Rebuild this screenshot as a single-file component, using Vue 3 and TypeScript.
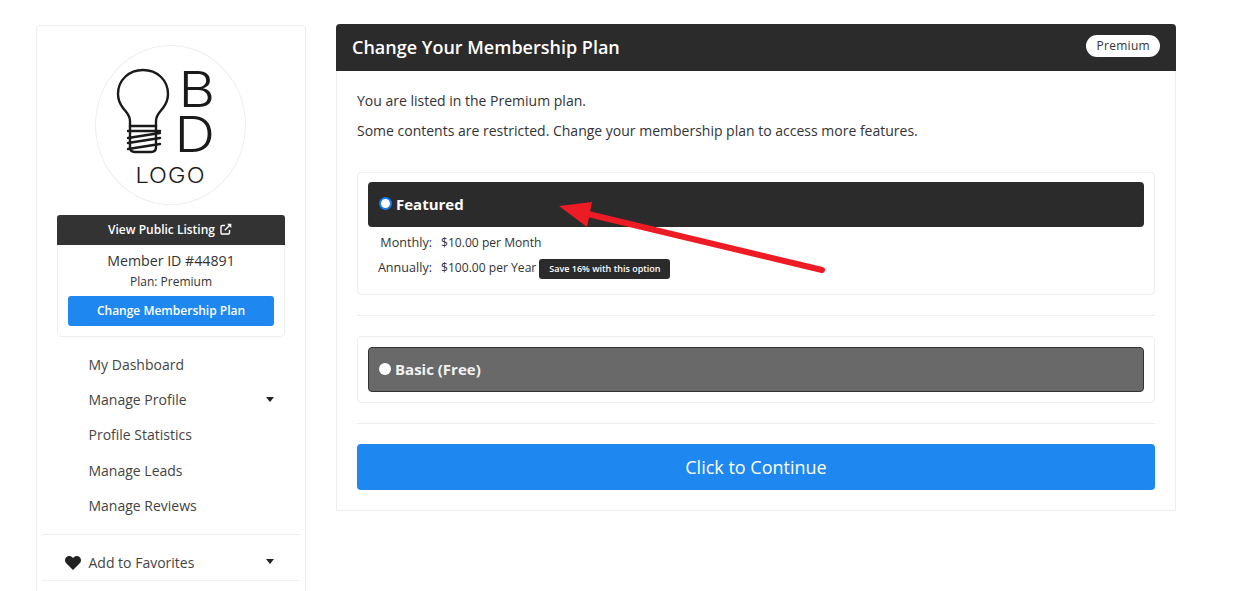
<script setup lang="ts">
const navItems: { label: string; caret?: boolean }[] = [
  { label: 'My Dashboard' },
  { label: 'Manage Profile', caret: true },
  { label: 'Profile Statistics' },
  { label: 'Manage Leads' },
  { label: 'Manage Reviews' },
];
</script>

<template>
  <div class="page">
    <aside class="sidebar">
      <div class="logo">
        <svg width="151" height="160" viewBox="0 0 151 160">
          <g transform="translate(1 0)" fill="none" stroke="#1a1a1a" stroke-width="2.4" stroke-linecap="round" stroke-linejoin="round">
            <path d="M34 81V76C34 70 30 67 27 63 24 59 22 55 22 49 22 35 33 25 47 25 61 25 72 35 72 49 72 55 70 59 67 63 64 67 60 70 60 76V81" />
            <path d="M34 81V102c0 3 2 5 5 5h16c3 0 5-2 5-5V81" />
            <path d="M34 81H60" />
            <path d="M32 86H64M32 93 64 88M32 98 64 93M32 104 64 99" />
          </g>
          <text transform="translate(83.500 62) scale(1.15 1)" class="logo-letter">B</text>
          <text transform="translate(79.400 107) scale(1.15 1)" class="logo-letter">D</text>
          <text transform="translate(75.500 138) scale(1.12 1)" text-anchor="middle" class="logo-word">LOGO</text>
        </svg>
      </div>

      <div class="member">
        <a class="listing">
          View Public Listing
          <svg width="12" height="12" viewBox="0 0 12 12" fill="none" stroke="#fff" stroke-width="1.400">
            <path d="M9.500 7v2.800c0 .7-.5 1.200-1.200 1.200H2.200C1.500 11 1 10.500 1 9.800V3.700c0-.7.500-1.200 1.200-1.200H5" />
            <path d="M4.800 7.200 10.500 1.500" />
            <path d="M7 .7h4.300V5z" fill="#fff" stroke="none" />
          </svg>
        </a>
        <div class="member-body">
          <div class="member-id">Member ID #44891</div>
          <div class="member-plan">Plan: Premium</div>
          <button type="button" class="change-btn">Change Membership Plan</button>
        </div>
      </div>

      <nav class="nav">
        <a v-for="item in navItems" :key="item.label" class="nav-item">
          {{ item.label }}
          <span v-if="item.caret" class="caret"></span>
        </a>
      </nav>

      <div class="favorites">
        <svg class="heart" width="16" height="14" viewBox="0 0 16 14">
          <path d="M8 14 1.500 7.500C-.5 5.500-.4 2.800 1.200 1.200 2.900-.4 5.600-.4 7.200 1.300L8 2.100l.8-.8c1.600-1.700 4.300-1.700 6 -.1 1.600 1.600 1.700 4.300-.3 6.300z" fill="#222" />
        </svg>
        <a class="nav-item">
          Add to Favorites
          <span class="caret"></span>
        </a>
      </div>
    </aside>

    <main class="panel">
      <header class="panel-head">
        <h1>Change Your Membership Plan</h1>
        <span class="badge">Premium</span>
      </header>
      <div class="panel-body">
        <p>You are listed in the Premium plan.</p>
        <p>Some contents are restricted. Change your membership plan to access more features.</p>

        <section class="plan plan-first">
          <label class="plan-head">
            <input type="radio" name="plan" checked />
            Featured
          </label>
          <div class="price-row">
            <span class="price-label">Monthly:</span>
            <span>$10.00 per Month</span>
          </div>
          <div class="price-row">
            <span class="price-label">Annually:</span>
            <span>$100.00 per Year</span>
            <span class="save">Save 16% with this option</span>
          </div>
        </section>

        <hr />

        <section class="plan">
          <label class="plan-head free">
            <input type="radio" name="plan" />
            Basic (Free)
          </label>
        </section>

        <hr />

        <button type="button" class="continue">Click to Continue</button>
      </div>
    </main>

    <!-- annotation drawn on top of the screenshot -->
    <svg class="arrow" width="1243" height="591" viewBox="0 0 1243 591">
      <path d="M822 270 588 214" stroke="#ed1c24" stroke-width="6" stroke-linecap="round" fill="none" />
      <path d="M559 206 592 202 587 227z" fill="#ed1c24" />
    </svg>
  </div>
</template>

<style>
html,
body {
  margin: 0;
  background: #fff;
  overflow: hidden;
}
</style>

<style scoped>
.page {
  position: relative;
  display: flex;
  align-items: flex-start;
  gap: 30px;
  width: 1243px;
  height: 591px;
  box-sizing: border-box;
  padding: 24px 0 0 36px;
  overflow: hidden;
  font-family: "Open Sans", sans-serif;
  color: #333;
}

.sidebar {
  flex: none;
  width: 270px;
  box-sizing: border-box;
  margin-top: 1px;
  padding: 19px 5px 60px;
  border: 1px solid #eee;
  border-radius: 4px;
}

.logo {
  width: 151px;
  height: 160px;
  margin: 0 0 10px 53px;
  border: 1px solid #eee;
  border-radius: 50%;
  box-sizing: border-box;
  overflow: hidden;
}

.logo svg {
  display: block;
  margin: -1px;
}

.logo-letter {
  font-family: Inter, sans-serif;
  font-weight: 300;
  font-size: 49px;
  fill: #1a1a1a;
}

.logo-word {
  font-family: Inter, sans-serif;
  font-weight: 300;
  font-size: 21px;
  letter-spacing: 1px;
  fill: #1a1a1a;
}

.member {
  width: 228px;
  box-sizing: border-box;
  margin-left: 15px;
  border: 1px solid #eee;
  border-radius: 5px;
}

.listing {
  display: flex;
  align-items: center;
  justify-content: center;
  gap: 5px;
  height: 30px;
  padding: 0 2px 2px 0;
  box-sizing: border-box;
  margin: -1px -1px 0;
  border-radius: 3px 3px 0 0;
  background: #333;
  color: #fff;
  font-size: 12px;
  font-weight: 600;
}

.member-body {
  padding: 6px 10px 10px;
  text-align: center;
}

.member-id {
  font-size: 14.200px;
  font-weight: 500;
  line-height: 20px;
  color: #333;
}

.member-plan {
  margin-top: 1px;
  font-size: 12px;
  line-height: 20px;
}

.change-btn {
  display: block;
  width: 100%;
  height: 30px;
  margin-top: 4px;
  padding: 0 0 1px;
  border: 0;
  border-radius: 3px;
  background: #1f87f0;
  color: #fff;
  font-family: inherit;
  font-size: 12px;
  font-weight: 600;
}

.nav {
  margin-top: 9.750px;
  padding-bottom: 11.250px;
  border-bottom: 1px solid #eee;
}

.nav-item {
  display: flex;
  align-items: center;
  justify-content: space-between;
  height: 35.250px;
  padding: 0 26px 0 46.500px;
  font-size: 14px;
  color: #444;
}

.caret {
  width: 0;
  height: 0;
  margin-bottom: 1px;
  border-top: 5px solid #222;
  border-left: 4.500px solid transparent;
  border-right: 4.500px solid transparent;
}

.favorites {
  position: relative;
  margin-top: 9px;
  border-bottom: 1px solid #f3f3f3;
}

.favorites .nav-item {
  height: 36px;
}

.heart {
  position: absolute;
  left: 23px;
  top: 12px;
}

.panel {
  flex: none;
  width: 840px;
}

.panel-head {
  display: flex;
  align-items: center;
  justify-content: space-between;
  height: 47px;
  box-sizing: border-box;
  padding: 0 16px;
  background: #2b2b2b;
  border-radius: 4px 4px 0 0;
}

.panel-head h1 {
  margin: -2px 0 0;
  color: #fff;
  font-size: 18px;
  font-weight: 600;
}

.badge {
  margin-top: -4px;
  padding: 0 10px;
  height: 22px;
  line-height: 22px;
  border-radius: 11px;
  background: #fff;
  color: #333;
  font-size: 12px;
  font-weight: 500;
  letter-spacing: 0.3px;
}

.panel-body {
  height: 440px;
  box-sizing: border-box;
  padding: 20px;
  border: 1px solid #eee;
  border-top: 0;
}

.panel-body p {
  margin: 0 0 10px;
  font-size: 14px;
  line-height: 20px;
}

.plan {
  padding: 10px;
  border: 1px solid #eee;
  border-radius: 4px;
}

.plan-first {
  margin-top: 31px;
  height: 123px;
  box-sizing: border-box;
  padding-top: 9px;
}

.plan-head {
  display: flex;
  align-items: center;
  gap: 4px;
  height: 45px;
  box-sizing: border-box;
  padding: 0 11px 1px;
  border-radius: 4px;
  background: #2b2b2b;
  color: #fff;
  font-size: 15px;
  font-weight: 700;
}

.plan-head.free {
  padding: 0 10px 1px;
  background: #696969;
  border: 1px solid #333;
  color: #f2f2f2;
}

.plan-head input {
  appearance: none;
  width: 12px;
  height: 12px;
  margin: -1px 0 0;
  border-radius: 50%;
  background: #fff;
}

.plan-head input:checked {
  width: 13px;
  height: 13px;
  border: 2.500px solid #1a7cf0;
}

.price-row {
  display: flex;
  align-items: center;
  height: 25px;
  font-size: 12.100px;
}

.price-row:first-of-type {
  margin-top: 3px;
}

.price-label {
  width: 64px;
  margin-right: 9px;
  font-size: 12.600px;
  text-align: right;
}

.save {
  margin: 3px 0 0 3px;
  padding: 0 9px 0 10px;
  height: 20px;
  line-height: 20px;
  border-radius: 3px;
  background: #2b2b2b;
  color: #fff;
  font-size: 9px;
  font-weight: 600;
}

hr {
  height: 1px;
  margin: 20px 0;
  border: 0;
  background: #eee;
}

.continue {
  display: block;
  width: 100%;
  height: 46px;
  border: 0;
  border-radius: 4px;
  background: #1f87f0;
  color: #fff;
  font-family: inherit;
  font-size: 18px;
}

.arrow {
  position: absolute;
  left: 0;
  top: 0;
  pointer-events: none;
}
</style>
